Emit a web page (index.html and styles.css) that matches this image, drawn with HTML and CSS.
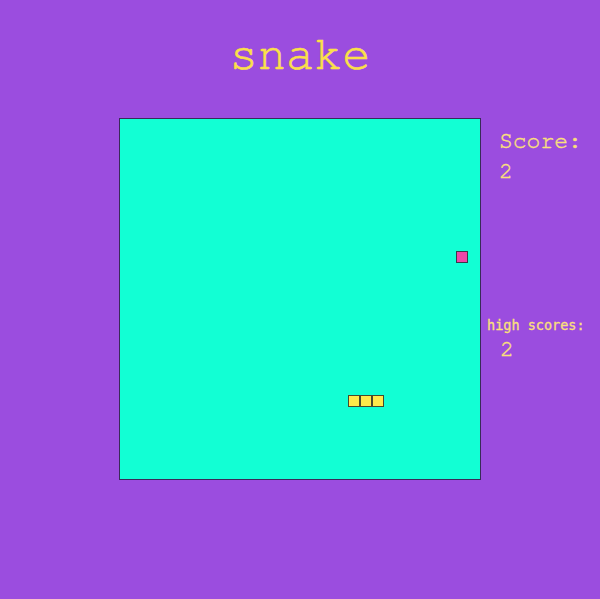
FILE: index.html
```html
<!DOCTYPE html>
<html>
<head>
<meta charset="utf-8">
<title>snake</title>
<link rel="stylesheet" href="styles.css">
</head>
<body>
<h1 class="title">snake</h1>
<div class="game">
  <div class="spacer"></div>
  <div class="board">
    <div class="food" style="grid-column: 29; grid-row: 12;"></div>
    <div class="seg" style="grid-column: 20; grid-row: 24;"></div>
    <div class="seg" style="grid-column: 21; grid-row: 24;"></div>
    <div class="seg" style="grid-column: 22; grid-row: 24;"></div>
  </div>
  <div class="panel">
    <div class="score-label">Score:</div>
    <div class="score-value">2</div>
    <div class="high-label">high scores:</div>
    <div class="high-value">2</div>
  </div>
</div>
</body>
</html>
```
FILE: styles.css
```css
html, body {
  margin: 0;
  padding: 0;
  background: #9b4ddf;
  width: 600px;
  height: 599px;
  overflow: hidden;
}
.title {
  margin: 0;
  padding-top: 30px;
  height: 86px;
  box-sizing: border-box;
  text-align: center;
  font-family: "Nimbus Mono PS", "Nimbus Mono L", "FreeMono", "Courier", "Liberation Mono", monospace;
  font-weight: normal;
  font-size: 47px;
  line-height: 50px;
  color: #fbe049;
  -webkit-text-stroke: 0.6px #fbe049;
}
.game {
  display: grid;
  grid-template-columns: 119px 362px 119px;
  margin-top: 32px;
}
.board {
  width: 362px;
  height: 362px;
  box-sizing: border-box;
  border: 1px solid #3a2a5a;
  background: #12ffd4;
  display: grid;
  grid-template-columns: repeat(30, 12px);
  grid-template-rows: repeat(30, 12px);
}
.seg {
  box-sizing: border-box;
  border: 1px solid #4a4a2a;
  background: #ffe94a;
}
.food {
  box-sizing: border-box;
  border: 1px solid #3a3a4a;
  background: #ef45a8;
}
.panel {
  display: flex;
  flex-direction: column;
  color: #fbe07a;
  font-family: "Nimbus Mono PS", "Nimbus Mono L", "FreeMono", "Courier", "Liberation Mono", monospace;
  -webkit-text-stroke: 0.4px #fbe07a;
}
.score-label {
  font-size: 23px;
  line-height: 30px;
  padding-left: 18px;
  margin-top: 9px;
}
.score-value {
  font-size: 23px;
  line-height: 30px;
  padding-left: 18px;
}
.high-label {
  font-family: "DejaVu Sans Mono", monospace;
  font-size: 13.5px;
  line-height: 20px;
  padding-left: 6px;
  margin-top: 128px;
  -webkit-text-stroke: 0.3px #fbe07a;
}
.high-value {
  font-size: 23px;
  line-height: 30px;
  padding-left: 19px;
}
```
